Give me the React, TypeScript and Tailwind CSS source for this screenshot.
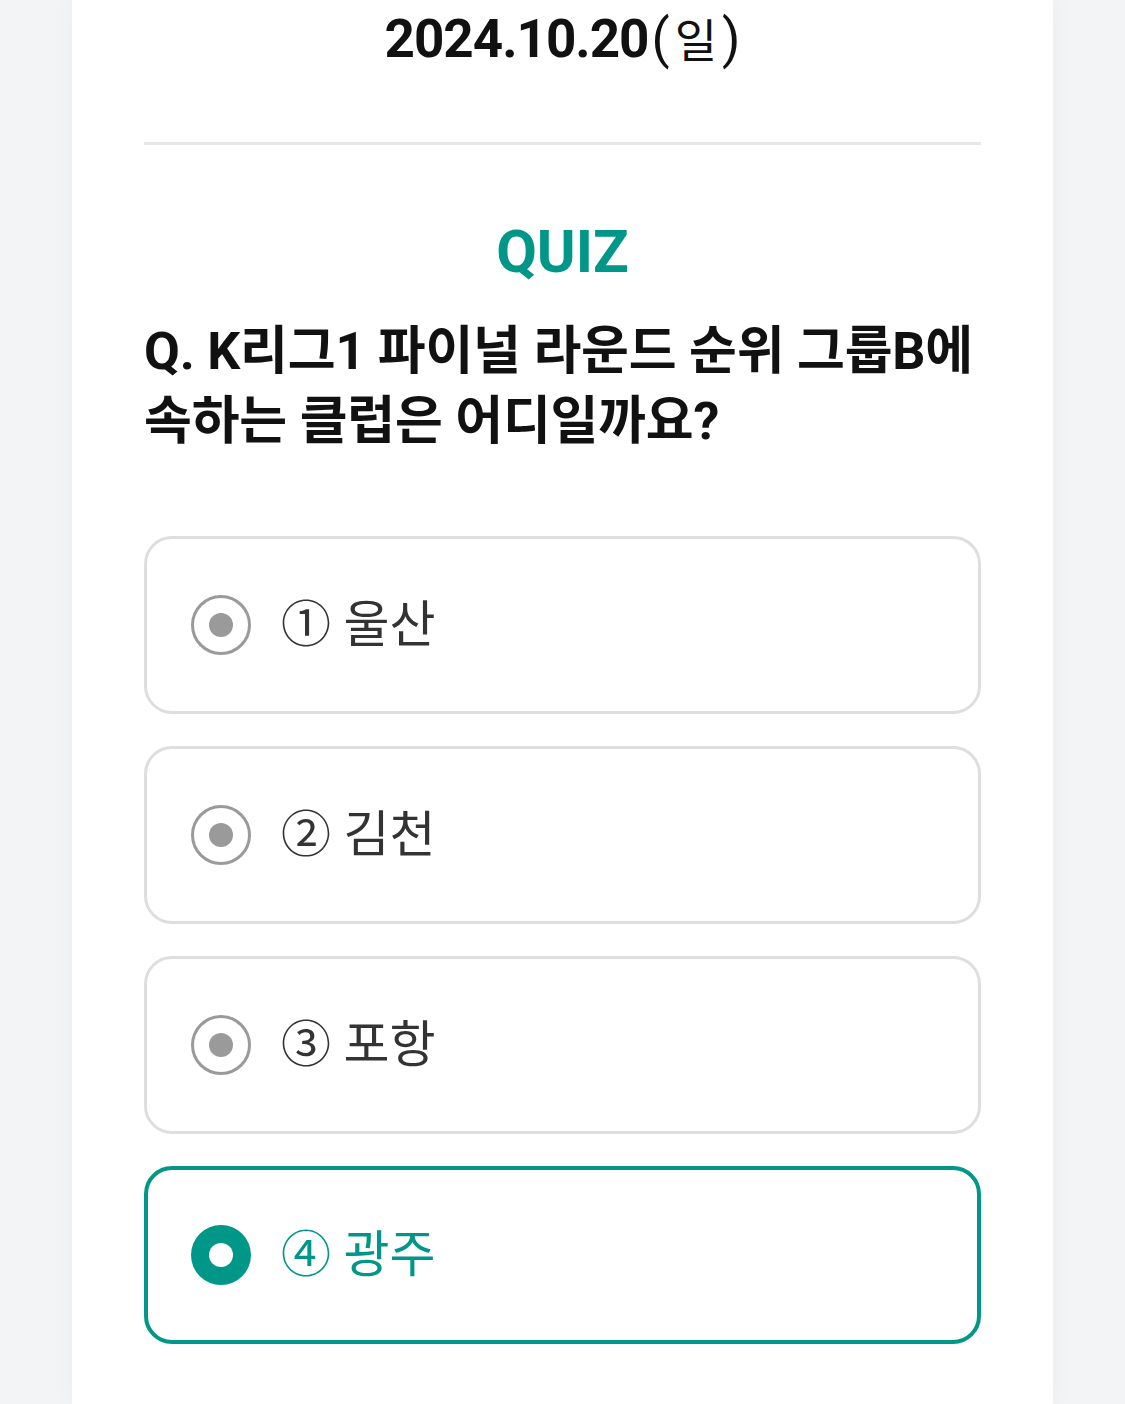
import React from 'react';

const options = [
  { no: '①', label: '울산' },
  { no: '②', label: '김천' },
  { no: '③', label: '포항' },
  { no: '④', label: '광주' },
];

function Radio({ checked }: { checked: boolean }) {
  if (checked) {
    return (
      <span className="flex h-[60px] w-[60px] shrink-0 items-center justify-center rounded-full bg-[#009688]">
        <span className="h-[24px] w-[24px] rounded-full bg-white" />
      </span>
    );
  }
  return (
    <span className="flex h-[60px] w-[60px] shrink-0 items-center justify-center rounded-full border-[3px] border-[#9a9a9a]">
      <span className="h-[24px] w-[24px] rounded-full bg-[#9a9a9a]" />
    </span>
  );
}

export default function App() {
  const selected = 3;

  return (
    <div className="min-h-screen w-full bg-[#f3f4f6] font-['Roboto','Noto_Sans_CJK_KR',sans-serif]">
      <div className="mx-[72px] min-h-[1404px] bg-white px-[72px] shadow-[0_0_24px_rgba(0,0,0,0.04)]">
        {/* 날짜 */}
        <div className="pt-[13px] text-center text-[53px] leading-[53px] text-[#111]">
          <span className="font-bold tracking-[-1px]">2024.10.20</span>
          <span className="ml-[3px] font-normal">
            (<span className="mx-[5px] text-[46px]">일</span>)
          </span>
        </div>

        <div className="mt-[74px] h-[3px] bg-[#e8e8e8]" />

        {/* 퀴즈 */}
        <h2 className="mt-[77px] text-center text-[59px] font-bold leading-[59px] text-[#009688]">
          QUIZ
        </h2>

        <p className="mt-[36px] whitespace-nowrap text-[52px] font-bold leading-[70px] tracking-[-0.2px] text-[#111]">
          Q. K리그1 파이널 라운드 순위 그룹B에
          <br />
          속하는 클럽은 어디일까요?
        </p>

        <div className="mt-[79px] flex flex-col gap-[32px] pb-[60px]">
          {options.map((o, i) => {
            const on = i === selected;
            return (
              <div
                key={o.no}
                className={
                  on
                    ? 'flex h-[178px] items-center gap-[30px] rounded-[28px] border-[4px] border-[#009688] pl-[43px]'
                    : 'flex h-[178px] items-center gap-[30px] rounded-[28px] border-[3px] border-[#dedede] pl-[44px]'
                }
              >
                <Radio checked={on} />
                <span
                  className={
                    on
                      ? 'text-[50px] leading-none text-[#009688]'
                      : 'text-[50px] leading-none text-[#333]'
                  }
                >
                  {o.no} {o.label}
                </span>
              </div>
            );
          })}
        </div>
      </div>
    </div>
  );
}
